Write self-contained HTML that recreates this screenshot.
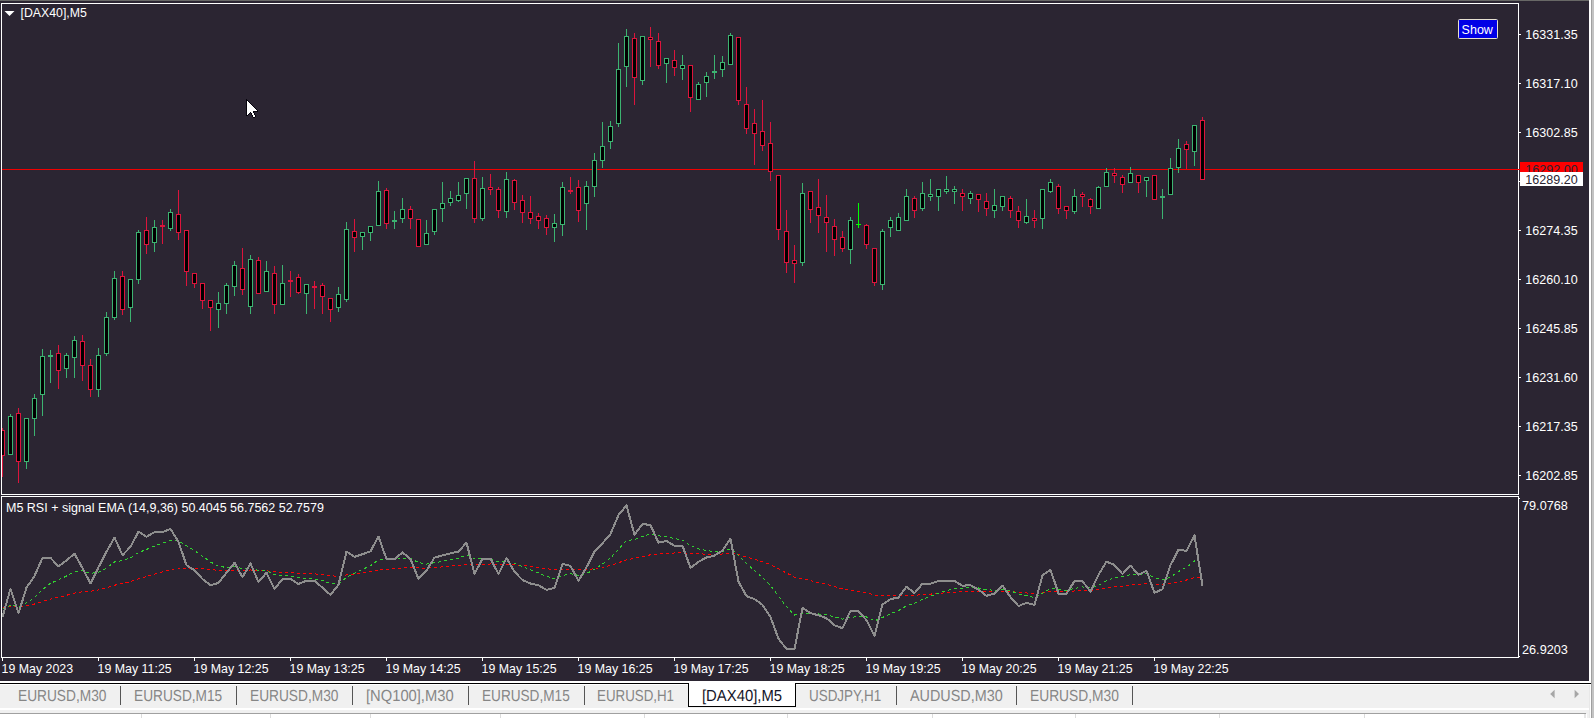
<!DOCTYPE html><html><head><meta charset="utf-8"><title>[DAX40],M5</title><style>
html,body{margin:0;padding:0}
body{width:1594px;height:718px;overflow:hidden;position:relative;background:#2b2532;font-family:"Liberation Sans","DejaVu Sans",sans-serif}
.abs{position:absolute}
.t{position:absolute;color:#fff;font-size:12.3px;line-height:14px;white-space:nowrap}
.pl{left:1525.3px;font-size:12.55px}
.tm{font-size:12.4px}
.tab{position:absolute;top:688px;height:18px;line-height:18px;font-size:16px;text-rendering:geometricPrecision;color:#868686;white-space:nowrap;transform-origin:0 78%}
.sep{position:absolute;top:686px;width:1px;height:19px;background:#555}
.vl{position:absolute;top:714px;width:1px;height:4px;background:#dcdcdc}

</style></head><body>
<div class="abs" style="left:0;top:0;width:1589px;height:1px;background:#686866"></div>
<svg width="1594" height="681" viewBox="0 0 1594 681" style="position:absolute;left:0;top:0" shape-rendering="crispEdges">
<g fill="#fff">
<rect x="1" y="3" width="1518" height="1"/>
<rect x="1" y="3" width="1" height="492"/>
<rect x="1" y="494" width="1518" height="1"/>
<rect x="1518" y="3" width="1" height="492"/>
<rect x="1" y="496" width="1518" height="1"/>
<rect x="1" y="496" width="1" height="162"/>
<rect x="1" y="657" width="1518" height="1"/>
<rect x="1518" y="496" width="1" height="162"/>
<rect x="1519" y="34" width="2" height="1"/>
<rect x="1519" y="83" width="2" height="1"/>
<rect x="1519" y="132" width="2" height="1"/>
<rect x="1519" y="181" width="2" height="1"/>
<rect x="1519" y="230" width="2" height="1"/>
<rect x="1519" y="279" width="2" height="1"/>
<rect x="1519" y="328" width="2" height="1"/>
<rect x="1519" y="377" width="2" height="1"/>
<rect x="1519" y="426" width="2" height="1"/>
<rect x="1519" y="475" width="2" height="1"/>
<rect x="1519" y="498" width="1" height="1"/>
<rect x="1519" y="656" width="1" height="1"/>
<rect x="2" y="658" width="1" height="3"/>
<rect x="98" y="658" width="1" height="3"/>
<rect x="194" y="658" width="1" height="3"/>
<rect x="290" y="658" width="1" height="3"/>
<rect x="386" y="658" width="1" height="3"/>
<rect x="482" y="658" width="1" height="3"/>
<rect x="578" y="658" width="1" height="3"/>
<rect x="674" y="658" width="1" height="3"/>
<rect x="770" y="658" width="1" height="3"/>
<rect x="866" y="658" width="1" height="3"/>
<rect x="962" y="658" width="1" height="3"/>
<rect x="1058" y="658" width="1" height="3"/>
<rect x="1154" y="658" width="1" height="3"/>
</g>
<rect x="2" y="169" width="1518" height="1" fill="#f00000"/>
<rect x="2" y="428" width="1" height="49" fill="#dc143c"/>
<rect x="2" y="430" width="3" height="26" fill="#dc143c"/>
<rect x="2" y="431" width="2" height="24" fill="#000"/>
<rect x="10" y="414" width="1" height="41" fill="#3cb371"/>
<rect x="8" y="416" width="5" height="39" fill="#3cb371"/>
<rect x="9" y="417" width="3" height="37" fill="#000"/>
<rect x="18" y="408" width="1" height="75" fill="#dc143c"/>
<rect x="16" y="413" width="5" height="49" fill="#dc143c"/>
<rect x="17" y="414" width="3" height="47" fill="#000"/>
<rect x="26" y="418" width="1" height="51" fill="#3cb371"/>
<rect x="24" y="418" width="5" height="44" fill="#3cb371"/>
<rect x="25" y="419" width="3" height="42" fill="#000"/>
<rect x="34" y="394" width="1" height="42" fill="#3cb371"/>
<rect x="32" y="398" width="5" height="21" fill="#3cb371"/>
<rect x="33" y="399" width="3" height="19" fill="#000"/>
<rect x="42" y="349" width="1" height="67" fill="#3cb371"/>
<rect x="40" y="356" width="5" height="39" fill="#3cb371"/>
<rect x="41" y="357" width="3" height="37" fill="#000"/>
<rect x="50" y="350" width="1" height="33" fill="#3cb371"/>
<rect x="48" y="355" width="5" height="2" fill="#3cb371"/>
<rect x="58" y="345" width="1" height="44" fill="#dc143c"/>
<rect x="56" y="353" width="5" height="18" fill="#dc143c"/>
<rect x="57" y="354" width="3" height="16" fill="#000"/>
<rect x="66" y="353" width="1" height="25" fill="#3cb371"/>
<rect x="64" y="355" width="5" height="14" fill="#3cb371"/>
<rect x="65" y="356" width="3" height="12" fill="#000"/>
<rect x="74" y="336" width="1" height="42" fill="#3cb371"/>
<rect x="72" y="340" width="5" height="18" fill="#3cb371"/>
<rect x="73" y="341" width="3" height="16" fill="#000"/>
<rect x="82" y="335" width="1" height="46" fill="#dc143c"/>
<rect x="80" y="341" width="5" height="25" fill="#dc143c"/>
<rect x="81" y="342" width="3" height="23" fill="#000"/>
<rect x="90" y="359" width="1" height="38" fill="#dc143c"/>
<rect x="88" y="365" width="5" height="25" fill="#dc143c"/>
<rect x="89" y="366" width="3" height="23" fill="#000"/>
<rect x="98" y="348" width="1" height="49" fill="#3cb371"/>
<rect x="96" y="355" width="5" height="35" fill="#3cb371"/>
<rect x="97" y="356" width="3" height="33" fill="#000"/>
<rect x="106" y="312" width="1" height="44" fill="#3cb371"/>
<rect x="104" y="317" width="5" height="37" fill="#3cb371"/>
<rect x="105" y="318" width="3" height="35" fill="#000"/>
<rect x="114" y="271" width="1" height="49" fill="#3cb371"/>
<rect x="112" y="278" width="5" height="40" fill="#3cb371"/>
<rect x="113" y="279" width="3" height="38" fill="#000"/>
<rect x="122" y="271" width="1" height="44" fill="#dc143c"/>
<rect x="120" y="276" width="5" height="34" fill="#dc143c"/>
<rect x="121" y="277" width="3" height="32" fill="#000"/>
<rect x="130" y="279" width="1" height="43" fill="#3cb371"/>
<rect x="128" y="279" width="5" height="29" fill="#3cb371"/>
<rect x="129" y="280" width="3" height="27" fill="#000"/>
<rect x="138" y="230" width="1" height="54" fill="#3cb371"/>
<rect x="136" y="232" width="5" height="48" fill="#3cb371"/>
<rect x="137" y="233" width="3" height="46" fill="#000"/>
<rect x="146" y="217" width="1" height="37" fill="#dc143c"/>
<rect x="144" y="230" width="5" height="15" fill="#dc143c"/>
<rect x="145" y="231" width="3" height="13" fill="#000"/>
<rect x="154" y="220" width="1" height="32" fill="#3cb371"/>
<rect x="152" y="227" width="5" height="16" fill="#3cb371"/>
<rect x="153" y="228" width="3" height="14" fill="#000"/>
<rect x="162" y="220" width="1" height="24" fill="#dc143c"/>
<rect x="160" y="225" width="5" height="2" fill="#dc143c"/>
<rect x="170" y="209" width="1" height="22" fill="#3cb371"/>
<rect x="168" y="212" width="5" height="17" fill="#3cb371"/>
<rect x="169" y="213" width="3" height="15" fill="#000"/>
<rect x="178" y="190" width="1" height="50" fill="#dc143c"/>
<rect x="176" y="214" width="5" height="19" fill="#dc143c"/>
<rect x="177" y="215" width="3" height="17" fill="#000"/>
<rect x="186" y="230" width="1" height="56" fill="#dc143c"/>
<rect x="184" y="230" width="5" height="42" fill="#dc143c"/>
<rect x="185" y="231" width="3" height="40" fill="#000"/>
<rect x="194" y="273" width="1" height="15" fill="#dc143c"/>
<rect x="192" y="273" width="5" height="11" fill="#dc143c"/>
<rect x="193" y="274" width="3" height="9" fill="#000"/>
<rect x="202" y="283" width="1" height="26" fill="#dc143c"/>
<rect x="200" y="283" width="5" height="18" fill="#dc143c"/>
<rect x="201" y="284" width="3" height="16" fill="#000"/>
<rect x="210" y="300" width="1" height="31" fill="#dc143c"/>
<rect x="208" y="300" width="5" height="8" fill="#dc143c"/>
<rect x="209" y="301" width="3" height="6" fill="#000"/>
<rect x="218" y="292" width="1" height="36" fill="#3cb371"/>
<rect x="216" y="303" width="5" height="7" fill="#3cb371"/>
<rect x="217" y="304" width="3" height="5" fill="#000"/>
<rect x="226" y="283" width="1" height="31" fill="#3cb371"/>
<rect x="224" y="285" width="5" height="19" fill="#3cb371"/>
<rect x="225" y="286" width="3" height="17" fill="#000"/>
<rect x="234" y="261" width="1" height="35" fill="#3cb371"/>
<rect x="232" y="265" width="5" height="22" fill="#3cb371"/>
<rect x="233" y="266" width="3" height="20" fill="#000"/>
<rect x="242" y="248" width="1" height="47" fill="#dc143c"/>
<rect x="240" y="268" width="5" height="22" fill="#dc143c"/>
<rect x="241" y="269" width="3" height="20" fill="#000"/>
<rect x="250" y="255" width="1" height="59" fill="#3cb371"/>
<rect x="248" y="259" width="5" height="48" fill="#3cb371"/>
<rect x="249" y="260" width="3" height="46" fill="#000"/>
<rect x="258" y="257" width="1" height="37" fill="#dc143c"/>
<rect x="256" y="260" width="5" height="34" fill="#dc143c"/>
<rect x="257" y="261" width="3" height="32" fill="#000"/>
<rect x="266" y="261" width="1" height="31" fill="#3cb371"/>
<rect x="264" y="271" width="5" height="21" fill="#3cb371"/>
<rect x="265" y="272" width="3" height="19" fill="#000"/>
<rect x="274" y="266" width="1" height="48" fill="#dc143c"/>
<rect x="272" y="273" width="5" height="32" fill="#dc143c"/>
<rect x="273" y="274" width="3" height="30" fill="#000"/>
<rect x="282" y="265" width="1" height="40" fill="#3cb371"/>
<rect x="280" y="283" width="5" height="22" fill="#3cb371"/>
<rect x="281" y="284" width="3" height="20" fill="#000"/>
<rect x="290" y="271" width="1" height="26" fill="#dc143c"/>
<rect x="288" y="280" width="5" height="2" fill="#dc143c"/>
<rect x="298" y="274" width="1" height="20" fill="#dc143c"/>
<rect x="296" y="277" width="5" height="16" fill="#dc143c"/>
<rect x="297" y="278" width="3" height="14" fill="#000"/>
<rect x="306" y="284" width="1" height="30" fill="#3cb371"/>
<rect x="304" y="284" width="5" height="10" fill="#3cb371"/>
<rect x="305" y="285" width="3" height="8" fill="#000"/>
<rect x="314" y="281" width="1" height="28" fill="#dc143c"/>
<rect x="312" y="286" width="5" height="2" fill="#dc143c"/>
<rect x="322" y="283" width="1" height="31" fill="#dc143c"/>
<rect x="320" y="285" width="5" height="12" fill="#dc143c"/>
<rect x="321" y="286" width="3" height="10" fill="#000"/>
<rect x="330" y="298" width="1" height="24" fill="#dc143c"/>
<rect x="328" y="298" width="5" height="12" fill="#dc143c"/>
<rect x="329" y="299" width="3" height="10" fill="#000"/>
<rect x="338" y="287" width="1" height="25" fill="#3cb371"/>
<rect x="336" y="294" width="5" height="14" fill="#3cb371"/>
<rect x="337" y="295" width="3" height="12" fill="#000"/>
<rect x="346" y="222" width="1" height="80" fill="#3cb371"/>
<rect x="344" y="229" width="5" height="71" fill="#3cb371"/>
<rect x="345" y="230" width="3" height="69" fill="#000"/>
<rect x="354" y="219" width="1" height="33" fill="#dc143c"/>
<rect x="352" y="231" width="5" height="7" fill="#dc143c"/>
<rect x="353" y="232" width="3" height="5" fill="#000"/>
<rect x="362" y="232" width="1" height="18" fill="#3cb371"/>
<rect x="360" y="232" width="5" height="5" fill="#3cb371"/>
<rect x="361" y="233" width="3" height="3" fill="#000"/>
<rect x="370" y="226" width="1" height="15" fill="#3cb371"/>
<rect x="368" y="226" width="5" height="7" fill="#3cb371"/>
<rect x="369" y="227" width="3" height="5" fill="#000"/>
<rect x="378" y="181" width="1" height="45" fill="#3cb371"/>
<rect x="376" y="191" width="5" height="35" fill="#3cb371"/>
<rect x="377" y="192" width="3" height="33" fill="#000"/>
<rect x="386" y="188" width="1" height="41" fill="#dc143c"/>
<rect x="384" y="190" width="5" height="34" fill="#dc143c"/>
<rect x="385" y="191" width="3" height="32" fill="#000"/>
<rect x="394" y="211" width="1" height="18" fill="#3cb371"/>
<rect x="392" y="220" width="5" height="2" fill="#3cb371"/>
<rect x="402" y="198" width="1" height="25" fill="#3cb371"/>
<rect x="400" y="209" width="5" height="10" fill="#3cb371"/>
<rect x="401" y="210" width="3" height="8" fill="#000"/>
<rect x="410" y="206" width="1" height="23" fill="#dc143c"/>
<rect x="408" y="209" width="5" height="10" fill="#dc143c"/>
<rect x="409" y="210" width="3" height="8" fill="#000"/>
<rect x="418" y="219" width="1" height="28" fill="#dc143c"/>
<rect x="416" y="219" width="5" height="28" fill="#dc143c"/>
<rect x="417" y="220" width="3" height="26" fill="#000"/>
<rect x="426" y="220" width="1" height="25" fill="#3cb371"/>
<rect x="424" y="233" width="5" height="12" fill="#3cb371"/>
<rect x="425" y="234" width="3" height="10" fill="#000"/>
<rect x="434" y="209" width="1" height="26" fill="#3cb371"/>
<rect x="432" y="209" width="5" height="23" fill="#3cb371"/>
<rect x="433" y="210" width="3" height="21" fill="#000"/>
<rect x="442" y="182" width="1" height="40" fill="#3cb371"/>
<rect x="440" y="203" width="5" height="6" fill="#3cb371"/>
<rect x="441" y="204" width="3" height="4" fill="#000"/>
<rect x="450" y="191" width="1" height="15" fill="#3cb371"/>
<rect x="448" y="198" width="5" height="5" fill="#3cb371"/>
<rect x="449" y="199" width="3" height="3" fill="#000"/>
<rect x="458" y="182" width="1" height="20" fill="#3cb371"/>
<rect x="456" y="195" width="5" height="6" fill="#3cb371"/>
<rect x="457" y="196" width="3" height="4" fill="#000"/>
<rect x="466" y="178" width="1" height="31" fill="#3cb371"/>
<rect x="464" y="178" width="5" height="16" fill="#3cb371"/>
<rect x="465" y="179" width="3" height="14" fill="#000"/>
<rect x="474" y="161" width="1" height="62" fill="#dc143c"/>
<rect x="472" y="178" width="5" height="41" fill="#dc143c"/>
<rect x="473" y="179" width="3" height="39" fill="#000"/>
<rect x="482" y="177" width="1" height="44" fill="#3cb371"/>
<rect x="480" y="188" width="5" height="31" fill="#3cb371"/>
<rect x="481" y="189" width="3" height="29" fill="#000"/>
<rect x="490" y="174" width="1" height="21" fill="#dc143c"/>
<rect x="488" y="187" width="5" height="3" fill="#dc143c"/>
<rect x="489" y="188" width="3" height="1" fill="#000"/>
<rect x="498" y="187" width="1" height="31" fill="#dc143c"/>
<rect x="496" y="189" width="5" height="22" fill="#dc143c"/>
<rect x="497" y="190" width="3" height="20" fill="#000"/>
<rect x="506" y="172" width="1" height="46" fill="#3cb371"/>
<rect x="504" y="179" width="5" height="33" fill="#3cb371"/>
<rect x="505" y="180" width="3" height="31" fill="#000"/>
<rect x="514" y="179" width="1" height="31" fill="#dc143c"/>
<rect x="512" y="180" width="5" height="23" fill="#dc143c"/>
<rect x="513" y="181" width="3" height="21" fill="#000"/>
<rect x="522" y="195" width="1" height="28" fill="#dc143c"/>
<rect x="520" y="200" width="5" height="13" fill="#dc143c"/>
<rect x="521" y="201" width="3" height="11" fill="#000"/>
<rect x="530" y="196" width="1" height="28" fill="#dc143c"/>
<rect x="528" y="212" width="5" height="7" fill="#dc143c"/>
<rect x="529" y="213" width="3" height="5" fill="#000"/>
<rect x="538" y="213" width="1" height="16" fill="#dc143c"/>
<rect x="536" y="216" width="5" height="5" fill="#dc143c"/>
<rect x="537" y="217" width="3" height="3" fill="#000"/>
<rect x="546" y="215" width="1" height="20" fill="#dc143c"/>
<rect x="544" y="218" width="5" height="10" fill="#dc143c"/>
<rect x="545" y="219" width="3" height="8" fill="#000"/>
<rect x="554" y="214" width="1" height="28" fill="#3cb371"/>
<rect x="552" y="223" width="5" height="5" fill="#3cb371"/>
<rect x="553" y="224" width="3" height="3" fill="#000"/>
<rect x="562" y="182" width="1" height="54" fill="#3cb371"/>
<rect x="560" y="187" width="5" height="38" fill="#3cb371"/>
<rect x="561" y="188" width="3" height="36" fill="#000"/>
<rect x="570" y="177" width="1" height="17" fill="#dc143c"/>
<rect x="568" y="190" width="5" height="2" fill="#dc143c"/>
<rect x="578" y="180" width="1" height="42" fill="#dc143c"/>
<rect x="576" y="187" width="5" height="24" fill="#dc143c"/>
<rect x="577" y="188" width="3" height="22" fill="#000"/>
<rect x="586" y="181" width="1" height="49" fill="#3cb371"/>
<rect x="584" y="186" width="5" height="18" fill="#3cb371"/>
<rect x="585" y="187" width="3" height="16" fill="#000"/>
<rect x="594" y="153" width="1" height="44" fill="#3cb371"/>
<rect x="592" y="160" width="5" height="27" fill="#3cb371"/>
<rect x="593" y="161" width="3" height="25" fill="#000"/>
<rect x="602" y="122" width="1" height="46" fill="#3cb371"/>
<rect x="600" y="146" width="5" height="15" fill="#3cb371"/>
<rect x="601" y="147" width="3" height="13" fill="#000"/>
<rect x="610" y="121" width="1" height="28" fill="#3cb371"/>
<rect x="608" y="126" width="5" height="16" fill="#3cb371"/>
<rect x="609" y="127" width="3" height="14" fill="#000"/>
<rect x="618" y="43" width="1" height="84" fill="#3cb371"/>
<rect x="616" y="69" width="5" height="55" fill="#3cb371"/>
<rect x="617" y="70" width="3" height="53" fill="#000"/>
<rect x="626" y="29" width="1" height="58" fill="#3cb371"/>
<rect x="624" y="36" width="5" height="31" fill="#3cb371"/>
<rect x="625" y="37" width="3" height="29" fill="#000"/>
<rect x="634" y="33" width="1" height="72" fill="#dc143c"/>
<rect x="632" y="38" width="5" height="40" fill="#dc143c"/>
<rect x="633" y="39" width="3" height="38" fill="#000"/>
<rect x="642" y="36" width="1" height="49" fill="#3cb371"/>
<rect x="640" y="36" width="5" height="45" fill="#3cb371"/>
<rect x="641" y="37" width="3" height="43" fill="#000"/>
<rect x="650" y="27" width="1" height="40" fill="#dc143c"/>
<rect x="648" y="37" width="5" height="3" fill="#dc143c"/>
<rect x="649" y="38" width="3" height="1" fill="#000"/>
<rect x="658" y="33" width="1" height="36" fill="#dc143c"/>
<rect x="656" y="41" width="5" height="25" fill="#dc143c"/>
<rect x="657" y="42" width="3" height="23" fill="#000"/>
<rect x="666" y="58" width="1" height="25" fill="#3cb371"/>
<rect x="664" y="58" width="5" height="6" fill="#3cb371"/>
<rect x="665" y="59" width="3" height="4" fill="#000"/>
<rect x="674" y="50" width="1" height="26" fill="#dc143c"/>
<rect x="672" y="60" width="5" height="8" fill="#dc143c"/>
<rect x="673" y="61" width="3" height="6" fill="#000"/>
<rect x="682" y="55" width="1" height="25" fill="#3cb371"/>
<rect x="680" y="65" width="5" height="4" fill="#3cb371"/>
<rect x="681" y="66" width="3" height="2" fill="#000"/>
<rect x="690" y="65" width="1" height="47" fill="#dc143c"/>
<rect x="688" y="65" width="5" height="33" fill="#dc143c"/>
<rect x="689" y="66" width="3" height="31" fill="#000"/>
<rect x="698" y="82" width="1" height="18" fill="#3cb371"/>
<rect x="696" y="84" width="5" height="16" fill="#3cb371"/>
<rect x="697" y="85" width="3" height="14" fill="#000"/>
<rect x="706" y="72" width="1" height="25" fill="#3cb371"/>
<rect x="704" y="76" width="5" height="7" fill="#3cb371"/>
<rect x="705" y="77" width="3" height="5" fill="#000"/>
<rect x="714" y="55" width="1" height="24" fill="#3cb371"/>
<rect x="712" y="71" width="5" height="2" fill="#3cb371"/>
<rect x="722" y="56" width="1" height="21" fill="#3cb371"/>
<rect x="720" y="62" width="5" height="8" fill="#3cb371"/>
<rect x="721" y="63" width="3" height="6" fill="#000"/>
<rect x="730" y="33" width="1" height="32" fill="#3cb371"/>
<rect x="728" y="35" width="5" height="30" fill="#3cb371"/>
<rect x="729" y="36" width="3" height="28" fill="#000"/>
<rect x="738" y="37" width="1" height="68" fill="#dc143c"/>
<rect x="736" y="37" width="5" height="64" fill="#dc143c"/>
<rect x="737" y="38" width="3" height="62" fill="#000"/>
<rect x="746" y="87" width="1" height="47" fill="#dc143c"/>
<rect x="744" y="104" width="5" height="25" fill="#dc143c"/>
<rect x="745" y="105" width="3" height="23" fill="#000"/>
<rect x="754" y="109" width="1" height="56" fill="#dc143c"/>
<rect x="752" y="123" width="5" height="11" fill="#dc143c"/>
<rect x="753" y="124" width="3" height="9" fill="#000"/>
<rect x="762" y="100" width="1" height="51" fill="#dc143c"/>
<rect x="760" y="131" width="5" height="15" fill="#dc143c"/>
<rect x="761" y="132" width="3" height="13" fill="#000"/>
<rect x="770" y="122" width="1" height="59" fill="#dc143c"/>
<rect x="768" y="143" width="5" height="29" fill="#dc143c"/>
<rect x="769" y="144" width="3" height="27" fill="#000"/>
<rect x="778" y="175" width="1" height="65" fill="#dc143c"/>
<rect x="776" y="175" width="5" height="55" fill="#dc143c"/>
<rect x="777" y="176" width="3" height="53" fill="#000"/>
<rect x="786" y="210" width="1" height="63" fill="#dc143c"/>
<rect x="784" y="231" width="5" height="32" fill="#dc143c"/>
<rect x="785" y="232" width="3" height="30" fill="#000"/>
<rect x="794" y="245" width="1" height="38" fill="#dc143c"/>
<rect x="792" y="260" width="5" height="4" fill="#dc143c"/>
<rect x="793" y="261" width="3" height="2" fill="#000"/>
<rect x="802" y="183" width="1" height="83" fill="#3cb371"/>
<rect x="800" y="193" width="5" height="70" fill="#3cb371"/>
<rect x="801" y="194" width="3" height="68" fill="#000"/>
<rect x="810" y="191" width="1" height="32" fill="#dc143c"/>
<rect x="808" y="191" width="5" height="19" fill="#dc143c"/>
<rect x="809" y="192" width="3" height="17" fill="#000"/>
<rect x="818" y="179" width="1" height="54" fill="#dc143c"/>
<rect x="816" y="207" width="5" height="9" fill="#dc143c"/>
<rect x="817" y="208" width="3" height="7" fill="#000"/>
<rect x="826" y="195" width="1" height="57" fill="#dc143c"/>
<rect x="824" y="217" width="5" height="6" fill="#dc143c"/>
<rect x="825" y="218" width="3" height="4" fill="#000"/>
<rect x="834" y="219" width="1" height="37" fill="#dc143c"/>
<rect x="832" y="226" width="5" height="14" fill="#dc143c"/>
<rect x="833" y="227" width="3" height="12" fill="#000"/>
<rect x="842" y="231" width="1" height="21" fill="#dc143c"/>
<rect x="840" y="237" width="5" height="12" fill="#dc143c"/>
<rect x="841" y="238" width="3" height="10" fill="#000"/>
<rect x="850" y="217" width="1" height="47" fill="#3cb371"/>
<rect x="848" y="220" width="5" height="30" fill="#3cb371"/>
<rect x="849" y="221" width="3" height="28" fill="#000"/>
<rect x="858" y="203" width="1" height="25" fill="#00ff00"/>
<rect x="856" y="224" width="5" height="1" fill="#00ff00"/>
<rect x="866" y="224" width="1" height="25" fill="#dc143c"/>
<rect x="864" y="225" width="5" height="20" fill="#dc143c"/>
<rect x="865" y="226" width="3" height="18" fill="#000"/>
<rect x="874" y="248" width="1" height="38" fill="#dc143c"/>
<rect x="872" y="248" width="5" height="35" fill="#dc143c"/>
<rect x="873" y="249" width="3" height="33" fill="#000"/>
<rect x="882" y="229" width="1" height="61" fill="#3cb371"/>
<rect x="880" y="231" width="5" height="54" fill="#3cb371"/>
<rect x="881" y="232" width="3" height="52" fill="#000"/>
<rect x="890" y="217" width="1" height="20" fill="#3cb371"/>
<rect x="888" y="220" width="5" height="8" fill="#3cb371"/>
<rect x="889" y="221" width="3" height="6" fill="#000"/>
<rect x="898" y="213" width="1" height="18" fill="#3cb371"/>
<rect x="896" y="217" width="5" height="14" fill="#3cb371"/>
<rect x="897" y="218" width="3" height="12" fill="#000"/>
<rect x="906" y="189" width="1" height="32" fill="#3cb371"/>
<rect x="904" y="196" width="5" height="25" fill="#3cb371"/>
<rect x="905" y="197" width="3" height="23" fill="#000"/>
<rect x="914" y="196" width="1" height="22" fill="#dc143c"/>
<rect x="912" y="198" width="5" height="13" fill="#dc143c"/>
<rect x="913" y="199" width="3" height="11" fill="#000"/>
<rect x="922" y="182" width="1" height="29" fill="#3cb371"/>
<rect x="920" y="193" width="5" height="16" fill="#3cb371"/>
<rect x="921" y="194" width="3" height="14" fill="#000"/>
<rect x="930" y="179" width="1" height="22" fill="#3cb371"/>
<rect x="928" y="194" width="5" height="3" fill="#3cb371"/>
<rect x="929" y="195" width="3" height="1" fill="#000"/>
<rect x="938" y="189" width="1" height="22" fill="#3cb371"/>
<rect x="936" y="189" width="5" height="8" fill="#3cb371"/>
<rect x="937" y="190" width="3" height="6" fill="#000"/>
<rect x="946" y="176" width="1" height="18" fill="#3cb371"/>
<rect x="944" y="189" width="5" height="3" fill="#3cb371"/>
<rect x="945" y="190" width="3" height="1" fill="#000"/>
<rect x="954" y="186" width="1" height="18" fill="#3cb371"/>
<rect x="952" y="189" width="5" height="3" fill="#3cb371"/>
<rect x="953" y="190" width="3" height="1" fill="#000"/>
<rect x="962" y="189" width="1" height="22" fill="#dc143c"/>
<rect x="960" y="193" width="5" height="4" fill="#dc143c"/>
<rect x="961" y="194" width="3" height="2" fill="#000"/>
<rect x="970" y="191" width="1" height="13" fill="#3cb371"/>
<rect x="968" y="193" width="5" height="6" fill="#3cb371"/>
<rect x="969" y="194" width="3" height="4" fill="#000"/>
<rect x="978" y="194" width="1" height="18" fill="#dc143c"/>
<rect x="976" y="194" width="5" height="6" fill="#dc143c"/>
<rect x="977" y="195" width="3" height="4" fill="#000"/>
<rect x="986" y="193" width="1" height="23" fill="#dc143c"/>
<rect x="984" y="201" width="5" height="8" fill="#dc143c"/>
<rect x="985" y="202" width="3" height="6" fill="#000"/>
<rect x="994" y="189" width="1" height="29" fill="#3cb371"/>
<rect x="992" y="205" width="5" height="6" fill="#3cb371"/>
<rect x="993" y="206" width="3" height="4" fill="#000"/>
<rect x="1002" y="196" width="1" height="15" fill="#3cb371"/>
<rect x="1000" y="196" width="5" height="11" fill="#3cb371"/>
<rect x="1001" y="197" width="3" height="9" fill="#000"/>
<rect x="1010" y="196" width="1" height="22" fill="#dc143c"/>
<rect x="1008" y="198" width="5" height="13" fill="#dc143c"/>
<rect x="1009" y="199" width="3" height="11" fill="#000"/>
<rect x="1018" y="206" width="1" height="22" fill="#dc143c"/>
<rect x="1016" y="211" width="5" height="10" fill="#dc143c"/>
<rect x="1017" y="212" width="3" height="8" fill="#000"/>
<rect x="1026" y="199" width="1" height="25" fill="#3cb371"/>
<rect x="1024" y="216" width="5" height="7" fill="#3cb371"/>
<rect x="1025" y="217" width="3" height="5" fill="#000"/>
<rect x="1034" y="210" width="1" height="18" fill="#dc143c"/>
<rect x="1032" y="218" width="5" height="3" fill="#dc143c"/>
<rect x="1033" y="219" width="3" height="1" fill="#000"/>
<rect x="1042" y="189" width="1" height="40" fill="#3cb371"/>
<rect x="1040" y="189" width="5" height="30" fill="#3cb371"/>
<rect x="1041" y="190" width="3" height="28" fill="#000"/>
<rect x="1050" y="179" width="1" height="14" fill="#3cb371"/>
<rect x="1048" y="182" width="5" height="10" fill="#3cb371"/>
<rect x="1049" y="183" width="3" height="8" fill="#000"/>
<rect x="1058" y="184" width="1" height="30" fill="#dc143c"/>
<rect x="1056" y="186" width="5" height="23" fill="#dc143c"/>
<rect x="1057" y="187" width="3" height="21" fill="#000"/>
<rect x="1066" y="206" width="1" height="13" fill="#dc143c"/>
<rect x="1064" y="206" width="5" height="5" fill="#dc143c"/>
<rect x="1065" y="207" width="3" height="3" fill="#000"/>
<rect x="1074" y="189" width="1" height="25" fill="#3cb371"/>
<rect x="1072" y="196" width="5" height="16" fill="#3cb371"/>
<rect x="1073" y="197" width="3" height="14" fill="#000"/>
<rect x="1082" y="192" width="1" height="15" fill="#dc143c"/>
<rect x="1080" y="194" width="5" height="3" fill="#dc143c"/>
<rect x="1081" y="195" width="3" height="1" fill="#000"/>
<rect x="1090" y="198" width="1" height="16" fill="#dc143c"/>
<rect x="1088" y="199" width="5" height="8" fill="#dc143c"/>
<rect x="1089" y="200" width="3" height="6" fill="#000"/>
<rect x="1098" y="186" width="1" height="23" fill="#3cb371"/>
<rect x="1096" y="187" width="5" height="22" fill="#3cb371"/>
<rect x="1097" y="188" width="3" height="20" fill="#000"/>
<rect x="1106" y="168" width="1" height="19" fill="#3cb371"/>
<rect x="1104" y="172" width="5" height="15" fill="#3cb371"/>
<rect x="1105" y="173" width="3" height="13" fill="#000"/>
<rect x="1114" y="168" width="1" height="15" fill="#dc143c"/>
<rect x="1112" y="173" width="5" height="3" fill="#dc143c"/>
<rect x="1113" y="174" width="3" height="1" fill="#000"/>
<rect x="1122" y="175" width="1" height="18" fill="#dc143c"/>
<rect x="1120" y="177" width="5" height="8" fill="#dc143c"/>
<rect x="1121" y="178" width="3" height="6" fill="#000"/>
<rect x="1130" y="167" width="1" height="16" fill="#3cb371"/>
<rect x="1128" y="173" width="5" height="10" fill="#3cb371"/>
<rect x="1129" y="174" width="3" height="8" fill="#000"/>
<rect x="1138" y="175" width="1" height="18" fill="#dc143c"/>
<rect x="1136" y="175" width="5" height="8" fill="#dc143c"/>
<rect x="1137" y="176" width="3" height="6" fill="#000"/>
<rect x="1146" y="177" width="1" height="20" fill="#3cb371"/>
<rect x="1144" y="177" width="5" height="4" fill="#3cb371"/>
<rect x="1145" y="178" width="3" height="2" fill="#000"/>
<rect x="1154" y="175" width="1" height="25" fill="#dc143c"/>
<rect x="1152" y="175" width="5" height="25" fill="#dc143c"/>
<rect x="1153" y="176" width="3" height="23" fill="#000"/>
<rect x="1162" y="189" width="1" height="30" fill="#3cb371"/>
<rect x="1160" y="196" width="5" height="2" fill="#3cb371"/>
<rect x="1170" y="158" width="1" height="37" fill="#3cb371"/>
<rect x="1168" y="168" width="5" height="27" fill="#3cb371"/>
<rect x="1169" y="169" width="3" height="25" fill="#000"/>
<rect x="1178" y="139" width="1" height="34" fill="#3cb371"/>
<rect x="1176" y="148" width="5" height="20" fill="#3cb371"/>
<rect x="1177" y="149" width="3" height="18" fill="#000"/>
<rect x="1186" y="141" width="1" height="28" fill="#dc143c"/>
<rect x="1184" y="144" width="5" height="6" fill="#dc143c"/>
<rect x="1185" y="145" width="3" height="4" fill="#000"/>
<rect x="1194" y="125" width="1" height="41" fill="#3cb371"/>
<rect x="1192" y="125" width="5" height="27" fill="#3cb371"/>
<rect x="1193" y="126" width="3" height="25" fill="#000"/>
<rect x="1202" y="117" width="1" height="63" fill="#dc143c"/>
<rect x="1200" y="120" width="5" height="60" fill="#dc143c"/>
<rect x="1201" y="121" width="3" height="58" fill="#000"/>
<rect x="1" y="3" width="1" height="492" fill="#fff"/>
</svg>
<svg width="1594" height="681" viewBox="0 0 1594 681" style="position:absolute;left:0;top:0">
<polyline points="2.5,607.2 10.5,606.2 18.5,606.6 26.5,605.6 34.5,604.0 42.5,601.5 50.5,599.1 58.5,597.3 66.5,595.3 74.5,593.1 82.5,591.7 90.5,591.3 98.5,590.0 106.5,587.9 114.5,585.2 122.5,583.6 130.5,581.6 138.5,578.9 146.5,576.6 154.5,574.2 162.5,571.9 170.5,569.6 178.5,568.1 186.5,568.0 194.5,568.1 202.5,568.7 210.5,569.6 218.5,570.3 226.5,570.4 234.5,570.0 242.5,570.4 250.5,570.0 258.5,570.7 266.5,570.8 274.5,571.8 282.5,572.2 290.5,572.5 298.5,573.1 306.5,573.5 314.5,573.9 322.5,574.7 330.5,575.8 338.5,576.3 346.5,574.9 354.5,573.9 362.5,572.9 370.5,571.7 378.5,569.8 386.5,569.2 394.5,568.7 402.5,567.8 410.5,567.3 418.5,568.0 426.5,568.1 434.5,567.5 442.5,566.9 450.5,566.2 458.5,565.4 466.5,564.1 474.5,564.7 482.5,564.4 490.5,564.0 498.5,564.6 506.5,564.2 514.5,564.6 522.5,565.5 530.5,566.4 538.5,567.5 546.5,568.7 554.5,569.7 562.5,569.4 570.5,569.2 578.5,569.8 586.5,569.7 594.5,568.7 602.5,567.3 610.5,565.5 618.5,562.8 626.5,559.7 634.5,558.4 642.5,556.5 650.5,554.8 658.5,554.1 666.5,553.4 674.5,553.0 682.5,552.6 690.5,553.5 698.5,553.9 706.5,554.1 714.5,554.2 722.5,554.0 730.5,553.2 738.5,554.7 746.5,556.9 754.5,559.2 762.5,561.7 770.5,564.7 778.5,568.7 786.5,573.0 794.5,577.1 802.5,578.8 810.5,580.6 818.5,582.5 826.5,584.4 834.5,586.6 842.5,588.9 850.5,590.1 858.5,591.2 866.5,592.8 874.5,595.1 882.5,595.6 890.5,595.8 898.5,595.9 906.5,595.4 914.5,595.3 922.5,594.7 930.5,594.1 938.5,593.4 946.5,592.7 954.5,592.1 962.5,591.7 970.5,591.4 978.5,591.3 986.5,591.5 994.5,591.6 1002.5,591.3 1010.5,591.6 1018.5,592.4 1026.5,593.0 1034.5,593.6 1042.5,592.6 1050.5,591.4 1058.5,591.5 1066.5,591.6 1074.5,591.0 1082.5,590.5 1090.5,590.6 1098.5,589.7 1106.5,588.2 1114.5,586.9 1122.5,586.2 1130.5,585.1 1138.5,584.6 1146.5,583.8 1154.5,584.3 1162.5,584.6 1170.5,583.5 1178.5,581.7 1186.5,580.0 1194.5,577.6 1202.5,578.1" fill="none" stroke="#ff0000" stroke-width="1" stroke-dasharray="3 3" shape-rendering="crispEdges"/>
<polyline points="2.5,609.2 10.5,605.1 18.5,606.7 26.5,602.9 34.5,597.5 42.5,589.6 50.5,583.3 58.5,579.9 66.5,576.0 74.5,571.5 82.5,570.8 90.5,573.4 98.5,572.1 106.5,568.1 114.5,562.0 122.5,560.6 130.5,557.8 138.5,552.6 146.5,549.4 154.5,546.0 162.5,543.2 170.5,540.4 178.5,540.7 186.5,545.6 194.5,550.5 202.5,556.2 210.5,562.0 218.5,566.2 226.5,567.5 234.5,566.5 242.5,568.7 250.5,567.6 258.5,570.5 266.5,570.9 274.5,574.6 282.5,575.4 290.5,576.2 298.5,577.7 306.5,578.3 314.5,578.8 322.5,580.6 330.5,583.4 338.5,583.7 346.5,577.3 354.5,573.2 362.5,569.4 370.5,565.8 378.5,559.9 386.5,559.8 394.5,559.6 402.5,558.2 410.5,558.4 418.5,562.5 426.5,564.1 434.5,562.8 442.5,561.3 450.5,559.8 458.5,558.1 466.5,555.0 474.5,558.8 482.5,558.8 490.5,558.8 498.5,561.8 506.5,561.0 514.5,563.2 522.5,566.5 530.5,569.9 538.5,573.0 546.5,576.4 554.5,578.7 562.5,575.7 570.5,573.8 578.5,575.2 586.5,573.6 594.5,569.2 602.5,564.0 610.5,558.0 618.5,549.4 626.5,540.6 634.5,539.5 642.5,536.4 650.5,534.1 658.5,535.8 666.5,536.8 674.5,538.6 682.5,540.1 690.5,545.6 698.5,548.9 706.5,550.6 714.5,551.6 722.5,551.4 730.5,548.8 738.5,555.4 746.5,563.5 754.5,570.7 762.5,577.5 770.5,585.4 778.5,596.1 786.5,606.6 794.5,615.1 802.5,613.7 810.5,613.6 818.5,613.9 826.5,614.8 834.5,616.9 842.5,619.1 850.5,617.5 858.5,616.3 866.5,617.0 874.5,620.8 882.5,617.5 890.5,613.8 898.5,610.6 906.5,605.8 914.5,603.3 922.5,599.4 930.5,596.2 938.5,593.2 946.5,590.7 954.5,588.8 962.5,588.2 970.5,587.6 978.5,588.0 986.5,589.6 994.5,590.4 1002.5,589.4 1010.5,590.9 1018.5,593.9 1026.5,595.7 1034.5,597.5 1042.5,593.1 1050.5,588.4 1058.5,589.4 1066.5,590.3 1074.5,588.4 1082.5,587.0 1090.5,587.9 1098.5,585.3 1106.5,580.6 1114.5,577.5 1122.5,576.8 1130.5,574.6 1138.5,574.6 1146.5,573.8 1154.5,577.6 1162.5,579.9 1170.5,577.0 1178.5,571.5 1186.5,567.4 1194.5,561.0 1202.5,565.9" fill="none" stroke="#30d030" stroke-width="1" stroke-dasharray="3 3" shape-rendering="crispEdges"/>
<polyline points="2.5,617.0 10.5,588.7 18.5,613.1 26.5,587.7 34.5,576.0 42.5,557.9 50.5,557.9 58.5,566.3 66.5,560.4 74.5,553.6 82.5,568.2 90.5,583.4 98.5,567.3 106.5,551.7 114.5,537.6 122.5,555.2 130.5,546.8 138.5,531.6 146.5,536.7 154.5,532.2 162.5,532.2 170.5,528.9 178.5,541.9 186.5,565.3 194.5,570.2 202.5,579.0 210.5,585.2 218.5,582.9 226.5,572.8 234.5,562.7 242.5,577.2 250.5,563.4 258.5,582.0 266.5,572.7 274.5,589.0 282.5,579.0 290.5,579.0 298.5,584.0 306.5,580.7 314.5,580.7 322.5,587.8 330.5,594.8 338.5,584.7 346.5,551.6 354.5,556.9 362.5,554.2 370.5,551.3 378.5,536.6 386.5,559.1 394.5,559.1 402.5,552.4 410.5,559.1 418.5,579.0 426.5,570.7 434.5,557.6 442.5,555.4 450.5,553.4 458.5,551.5 466.5,542.7 474.5,574.0 482.5,558.7 490.5,558.7 498.5,574.0 506.5,557.8 514.5,571.8 522.5,580.0 530.5,583.5 538.5,585.3 546.5,589.8 554.5,587.9 562.5,563.8 570.5,566.0 578.5,580.8 586.5,567.3 594.5,551.4 602.5,543.2 610.5,534.1 618.5,515.0 626.5,505.5 634.5,534.9 642.5,523.9 650.5,525.1 658.5,542.7 666.5,540.9 674.5,545.8 682.5,545.8 690.5,567.9 698.5,561.8 706.5,557.5 714.5,555.6 722.5,550.5 730.5,538.7 738.5,581.7 746.5,596.1 754.5,599.1 762.5,604.8 770.5,617.0 778.5,638.8 786.5,648.9 794.5,648.9 802.5,608.0 810.5,613.2 818.5,615.3 826.5,618.2 834.5,625.2 842.5,628.3 850.5,610.9 858.5,611.4 866.5,620.1 874.5,635.8 882.5,604.5 890.5,599.1 898.5,597.5 906.5,586.7 914.5,593.1 922.5,583.7 930.5,583.7 938.5,581.0 946.5,581.0 954.5,581.0 962.5,585.7 970.5,585.2 978.5,589.7 986.5,595.8 994.5,593.5 1002.5,585.7 1010.5,597.0 1018.5,606.0 1026.5,602.8 1034.5,604.8 1042.5,575.4 1050.5,569.7 1058.5,593.5 1066.5,593.5 1074.5,581.2 1082.5,581.2 1090.5,591.7 1098.5,574.8 1106.5,561.6 1114.5,565.0 1122.5,574.0 1130.5,565.7 1138.5,574.7 1146.5,570.7 1154.5,592.8 1162.5,589.2 1170.5,565.2 1178.5,549.6 1186.5,550.9 1194.5,535.5 1202.5,585.7" fill="none" stroke="#8e8e8e" stroke-width="2" stroke-linejoin="round" shape-rendering="crispEdges"/>
<polygon points="4.5,11 14.5,11 9.5,16" fill="#fff"/>
<g transform="translate(246,99)" shape-rendering="crispEdges">
<rect x="0" y="0" width="1" height="1" fill="#05030c"/>
<rect x="0" y="1" width="2" height="1" fill="#05030c"/>
<rect x="0" y="2" width="1" height="1" fill="#05030c"/>
<rect x="1" y="2" width="1" height="1" fill="#fff"/>
<rect x="2" y="2" width="1" height="1" fill="#05030c"/>
<rect x="0" y="3" width="1" height="1" fill="#05030c"/>
<rect x="1" y="3" width="2" height="1" fill="#fff"/>
<rect x="3" y="3" width="1" height="1" fill="#05030c"/>
<rect x="0" y="4" width="1" height="1" fill="#05030c"/>
<rect x="1" y="4" width="3" height="1" fill="#fff"/>
<rect x="4" y="4" width="1" height="1" fill="#05030c"/>
<rect x="0" y="5" width="1" height="1" fill="#05030c"/>
<rect x="1" y="5" width="4" height="1" fill="#fff"/>
<rect x="5" y="5" width="1" height="1" fill="#05030c"/>
<rect x="0" y="6" width="1" height="1" fill="#05030c"/>
<rect x="1" y="6" width="5" height="1" fill="#fff"/>
<rect x="6" y="6" width="1" height="1" fill="#05030c"/>
<rect x="0" y="7" width="1" height="1" fill="#05030c"/>
<rect x="1" y="7" width="6" height="1" fill="#fff"/>
<rect x="7" y="7" width="1" height="1" fill="#05030c"/>
<rect x="0" y="8" width="1" height="1" fill="#05030c"/>
<rect x="1" y="8" width="7" height="1" fill="#fff"/>
<rect x="8" y="8" width="1" height="1" fill="#05030c"/>
<rect x="0" y="9" width="1" height="1" fill="#05030c"/>
<rect x="1" y="9" width="8" height="1" fill="#fff"/>
<rect x="9" y="9" width="1" height="1" fill="#05030c"/>
<rect x="0" y="10" width="1" height="1" fill="#05030c"/>
<rect x="1" y="10" width="9" height="1" fill="#fff"/>
<rect x="10" y="10" width="1" height="1" fill="#05030c"/>
<rect x="0" y="11" width="1" height="1" fill="#05030c"/>
<rect x="1" y="11" width="10" height="1" fill="#fff"/>
<rect x="11" y="11" width="1" height="1" fill="#05030c"/>
<rect x="0" y="12" width="1" height="1" fill="#05030c"/>
<rect x="1" y="12" width="6" height="1" fill="#fff"/>
<rect x="7" y="12" width="5" height="1" fill="#05030c"/>
<rect x="0" y="13" width="1" height="1" fill="#05030c"/>
<rect x="1" y="13" width="3" height="1" fill="#fff"/>
<rect x="4" y="13" width="1" height="1" fill="#05030c"/>
<rect x="5" y="13" width="2" height="1" fill="#fff"/>
<rect x="7" y="13" width="1" height="1" fill="#05030c"/>
<rect x="0" y="14" width="1" height="1" fill="#05030c"/>
<rect x="1" y="14" width="2" height="1" fill="#fff"/>
<rect x="3" y="14" width="1" height="1" fill="#05030c"/>
<rect x="5" y="14" width="1" height="1" fill="#05030c"/>
<rect x="6" y="14" width="2" height="1" fill="#fff"/>
<rect x="8" y="14" width="1" height="1" fill="#05030c"/>
<rect x="0" y="15" width="1" height="1" fill="#05030c"/>
<rect x="1" y="15" width="1" height="1" fill="#fff"/>
<rect x="2" y="15" width="1" height="1" fill="#05030c"/>
<rect x="5" y="15" width="1" height="1" fill="#05030c"/>
<rect x="6" y="15" width="2" height="1" fill="#fff"/>
<rect x="8" y="15" width="1" height="1" fill="#05030c"/>
<rect x="0" y="16" width="2" height="1" fill="#05030c"/>
<rect x="6" y="16" width="1" height="1" fill="#05030c"/>
<rect x="7" y="16" width="2" height="1" fill="#fff"/>
<rect x="9" y="16" width="1" height="1" fill="#05030c"/>
<rect x="6" y="17" width="1" height="1" fill="#05030c"/>
<rect x="7" y="17" width="2" height="1" fill="#fff"/>
<rect x="9" y="17" width="1" height="1" fill="#05030c"/>
<rect x="7" y="18" width="2" height="1" fill="#05030c"/>
</g>
</svg>
<div class="t" style="left:20.5px;top:6px">[DAX40],M5</div>
<div class="t" style="left:6px;top:500.5px;font-size:12.5px">M5 RSI + signal EMA (14,9,36) 50.4045 56.7562 52.7579</div>
<div class="t pl" style="top:28px">16331.35</div>
<div class="t pl" style="top:77px">16317.10</div>
<div class="t pl" style="top:126px">16302.85</div>
<div class="t pl" style="top:224px">16274.35</div>
<div class="t pl" style="top:273px">16260.10</div>
<div class="t pl" style="top:322px">16245.85</div>
<div class="t pl" style="top:371px">16231.60</div>
<div class="t pl" style="top:420px">16217.35</div>
<div class="t pl" style="top:469px">16202.85</div>
<div class="t" style="left:1522px;top:498.5px;font-size:12.7px">79.0768</div>
<div class="t" style="left:1522px;top:642.5px;font-size:12.7px">26.9203</div>
<div class="abs" style="left:1520px;top:162px;width:63px;height:10px;background:#ff0000;overflow:hidden"><div class="t" style="left:5.3px;top:1px;color:#2b2532;font-size:12.55px">16292.00</div></div>
<div class="abs" style="left:1520px;top:172px;width:63px;height:14px;background:#fff"><div class="t" style="left:5.3px;top:1px;color:#2b2532;font-size:12.55px">16289.20</div></div>
<div class="t tm" style="left:1.5px;top:661.5px">19 May 2023</div>
<div class="t tm" style="left:97.5px;top:661.5px">19 May 11:25</div>
<div class="t tm" style="left:193.5px;top:661.5px">19 May 12:25</div>
<div class="t tm" style="left:289.5px;top:661.5px">19 May 13:25</div>
<div class="t tm" style="left:385.5px;top:661.5px">19 May 14:25</div>
<div class="t tm" style="left:481.5px;top:661.5px">19 May 15:25</div>
<div class="t tm" style="left:577.5px;top:661.5px">19 May 16:25</div>
<div class="t tm" style="left:673.5px;top:661.5px">19 May 17:25</div>
<div class="t tm" style="left:769.5px;top:661.5px">19 May 18:25</div>
<div class="t tm" style="left:865.5px;top:661.5px">19 May 19:25</div>
<div class="t tm" style="left:961.5px;top:661.5px">19 May 20:25</div>
<div class="t tm" style="left:1057.5px;top:661.5px">19 May 21:25</div>
<div class="t tm" style="left:1153.5px;top:661.5px">19 May 22:25</div>
<div class="abs" style="left:1458px;top:19px;width:38px;height:18px;border:1px solid #e6e0d0;border-radius:1.5px;background:#0000e6;color:#fff;font-size:12.5px;line-height:18px;overflow:hidden"><span style="position:relative;left:2.6px;top:1px">Show</span></div>
<div class="abs" style="left:0;top:681px;width:1594px;height:37px;background:#f0f0f0"></div>
<div class="abs" style="left:0;top:681px;width:1591px;height:2px;background:#fff"></div>
<div class="abs" style="left:0;top:684px;width:1590px;height:1px;background:#fff"></div>
<div class="abs" style="left:0;top:708px;width:1590px;height:2px;background:#fff"></div>
<div class="abs" style="left:0;top:713px;width:1586px;height:1px;background:#a0a0a0"></div>
<div class="abs" style="left:0;top:714px;width:1584px;height:4px;background:#fff"></div>
<div class="abs" style="left:1584px;top:714px;width:2px;height:4px;background:#e6e6e6"></div>
<div class="abs" style="left:1586px;top:714px;width:1px;height:4px;background:#fff"></div>
<div class="vl" style="left:141px"></div>
<div class="vl" style="left:270px"></div>
<div class="vl" style="left:370px"></div>
<div class="vl" style="left:500px"></div>
<div class="vl" style="left:644px"></div>
<div class="vl" style="left:787px"></div>
<div class="vl" style="left:932px"></div>
<div class="vl" style="left:1075px"></div>
<div class="vl" style="left:1219px"></div>
<div class="vl" style="left:1364px"></div>
<div class="abs" style="left:688px;top:683px;width:106px;height:23px;background:#fff;border:1px solid #000;border-top:none"></div>
<div class="tab" style="left:18.1px;transform:scaleX(0.8571)">EURUSD,M30</div>
<div class="tab" style="left:133.9px;transform:scaleX(0.8551)">EURUSD,M15</div>
<div class="tab" style="left:249.9px;transform:scaleX(0.8571)">EURUSD,M30</div>
<div class="tab" style="left:366.4px;transform:scaleX(0.9206)">[NQ100],M30</div>
<div class="tab" style="left:481.9px;transform:scaleX(0.8503)">EURUSD,M15</div>
<div class="tab" style="left:597.3px;transform:scaleX(0.8327)">EURUSD,H1</div>
<div class="tab" style="left:702.0px;transform:scaleX(0.9274);color:#141428">[DAX40],M5</div>
<div class="tab" style="left:809.4px;transform:scaleX(0.8398)">USDJPY,H1</div>
<div class="tab" style="left:909.8px;transform:scaleX(0.8988)">AUDUSD,M30</div>
<div class="tab" style="left:1029.7px;transform:scaleX(0.8610)">EURUSD,M30</div>
<div class="sep" style="left:120px"></div>
<div class="sep" style="left:236px"></div>
<div class="sep" style="left:352px"></div>
<div class="sep" style="left:468px"></div>
<div class="sep" style="left:584px"></div>
<div class="sep" style="left:896px"></div>
<div class="sep" style="left:1016px"></div>
<div class="sep" style="left:1132px"></div>
<svg class="abs" style="left:1545px;top:686px" width="40" height="16" viewBox="0 0 40 16"><polygon points="5.2,8 9.6,3.8 9.6,12.2" fill="#a6a6a6"/><polygon points="34,8 29.6,3.8 29.6,12.2" fill="#a6a6a6"/></svg>
<div class="abs" style="left:1589px;top:0;width:2px;height:718px;background:#fff"></div>
<div class="abs" style="left:1591px;top:0;width:1px;height:718px;background:#a0a0a0"></div>
<div class="abs" style="left:1592px;top:0;width:2px;height:718px;background:#c4c4c4"></div>
<div class="abs" style="left:1589px;top:685px;width:1px;height:33px;background:#e8e8e8"></div>
<div class="abs" style="left:1589px;top:681px;width:2px;height:2px;background:#fff"></div>
<div class="abs" style="left:0;top:683px;width:1591px;height:1px;background:#000"></div>
<div class="abs" style="left:689px;top:683px;width:106px;height:1px;background:#fff"></div>
</body></html>
